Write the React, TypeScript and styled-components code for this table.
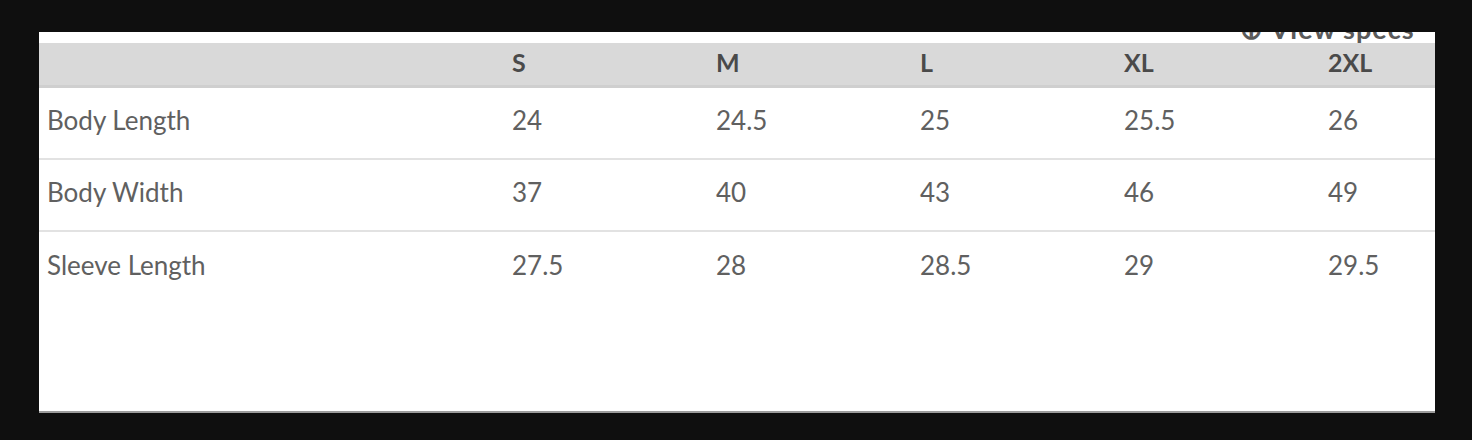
import React from "react";
import styled, { createGlobalStyle } from "styled-components";

const Global = createGlobalStyle`
  html, body { margin: 0; padding: 0; background: #0f0f0f; }
  body { font-family: Lato, "Open Sans", sans-serif; }
`;

const Stage = styled.div`
  width: 1472px;
  height: 440px;
  padding: 32px 37px 0 39px;
  box-sizing: border-box;
`;

const Panel = styled.div`
  width: 1396px;
  height: 381px;
  background: #ffffff;
  border-bottom: 2px solid #9c9c9c;
  box-sizing: border-box;
  overflow: hidden;
  display: flex;
  flex-direction: column;
`;

const TopStrip = styled.div`
  height: 11px;
  overflow: hidden;
  padding-left: 1201px;
`;

const CutLink = styled.div`
  margin-top: -14px;
  white-space: nowrap;
  font-size: 27px;
  line-height: 22px;
  letter-spacing: 1px;
  color: #5a5a5a;
  font-weight: 700;
`;

const Table = styled.div`
  display: grid;
  grid-template-columns: 465px repeat(5, 204px);
  width: 1485px;
`;

const HeadCell = styled.div`
  background: #d9d9d9;
  border-bottom: 3px solid #cfcfcf;
  height: 45px;
  box-sizing: border-box;
  padding: 0 0 4px 8px;
  display: flex;
  align-items: center;
  font-size: 25px;
  font-weight: 700;
  color: #4a4a4a;
`;

const Cell = styled.div<{ $last?: boolean }>`
  height: 72px;
  box-sizing: border-box;
  border-bottom: ${(p) => (p.$last ? "none" : "2px solid #e2e2e2")};
  padding: 0 0 6px 8px;
  display: flex;
  align-items: center;
  font-size: 26px;
  color: #606060;
  white-space: nowrap;
`;

const sizes = ["S", "M", "L", "XL", "2XL"];
const rows: [string, string[]][] = [
  ["Body Length", ["24", "24.5", "25", "25.5", "26"]],
  ["Body Width", ["37", "40", "43", "46", "49"]],
  ["Sleeve Length", ["27.5", "28", "28.5", "29", "29.5"]],
];

export default function App() {
  return (
    <>
      <Global />
      <Stage>
        <Panel>
          <TopStrip>
            <CutLink>⊕ View specs</CutLink>
          </TopStrip>
          <Table>
            <HeadCell />
            {sizes.map((s) => (
              <HeadCell key={s}>{s}</HeadCell>
            ))}
            {rows.map(([label, vals], i) => (
              <React.Fragment key={label}>
                <Cell $last={i === rows.length - 1}>{label}</Cell>
                {vals.map((v, j) => (
                  <Cell key={j} $last={i === rows.length - 1}>
                    {v}
                  </Cell>
                ))}
              </React.Fragment>
            ))}
          </Table>
        </Panel>
      </Stage>
    </>
  );
}
